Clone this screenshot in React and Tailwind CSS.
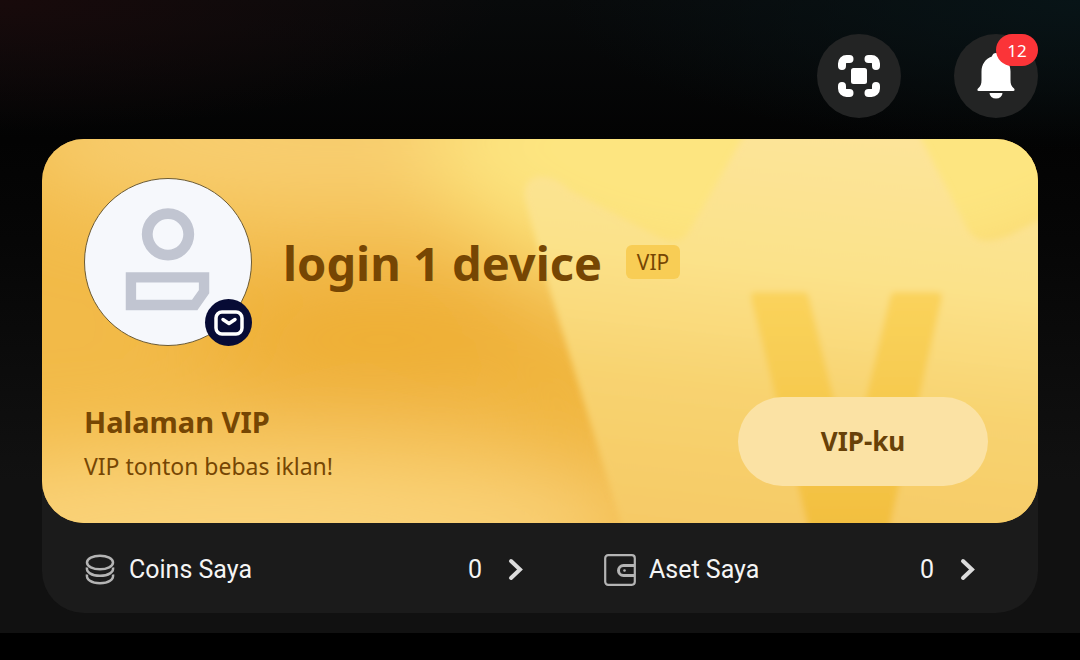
const noto = "font-['Noto_Sans','Noto_Sans_CJK_SC',sans-serif]";

function ScanIcon() {
  return (
    <svg viewBox="0 0 44 44" className="size-11" fill="none" aria-hidden="true">
      <g stroke="#fff" strokeWidth="8" strokeLinecap="round" strokeLinejoin="round">
        <path d="M5 12V9.500a4.500 4.500 0 0 1 4.500-4.500H12.500" />
        <path d="M31.500 5h3a4.500 4.500 0 0 1 4.500 4.500V12" />
        <path d="M39 32v2.500a4.500 4.500 0 0 1-4.500 4.500H31.500" />
        <path d="M12.500 39h-3a4.500 4.500 0 0 1-4.500-4.500V32" />
      </g>
      <rect x="14" y="14" width="16" height="16" rx="2.500" fill="#fff" />
    </svg>
  );
}

function BellIcon() {
  return (
    <svg viewBox="0 0 40 48" className="h-12 w-10" fill="#fff" aria-hidden="true">
      <path d="M20 1c-2 0-3.400 1.200-4.200 3.400C9.500 6.500 5.500 12.500 5.500 19.500V28c0 4-.8 6-3 8-1.800 1.700-1.300 3 .8 3h33.400c2.100 0 2.600-1.300.8-3-2.200-2-3-4-3-8v-8.500c0-7-4-13-10.300-15.100C23.400 2.200 22 1 20 1z" />
      <path d="M13.500 41h13a6.500 5.500 0 0 1-13 0z" />
    </svg>
  );
}

function AvatarIcon() {
  return (
    <svg viewBox="0 0 168 168" className="size-full" fill="none" stroke="#c1c5d1" aria-hidden="true">
      <circle cx="84" cy="56" r="21" strokeWidth="11" />
      <path d="M46.500 99.500h74V114l-9.500 13.500H46.500z" strokeWidth="10.500" />
    </svg>
  );
}

function MailIcon() {
  return (
    <svg viewBox="0 0 30 26" className="h-[26px] w-[30px]" fill="none" stroke="#fff" aria-hidden="true">
      <rect x="2" y="2" width="26" height="22" rx="6" strokeWidth="3.500" />
      <path d="M9 9.500 15 13.500l6-4" strokeWidth="3.500" strokeLinecap="round" strokeLinejoin="round" />
    </svg>
  );
}

function CoinsIcon() {
  return (
    <svg viewBox="0 0 32 32" className="size-8" fill="none" stroke="#b4b4b4" strokeWidth="2.500" aria-hidden="true">
      <ellipse cx="16" cy="8.500" rx="13" ry="6.800" />
      <path d="M3 13.500c-1 4.500 4.500 8.300 13 8.300s14-3.800 13-8.300" />
      <path d="M3 20.500c-1 5 4.500 8.800 13 8.800s14-3.800 13-8.800" />
    </svg>
  );
}

function WalletIcon() {
  return (
    <svg viewBox="0 0 32 32" className="size-8" fill="none" stroke="#b4b4b4" strokeWidth="2.200" aria-hidden="true">
      <rect x="1.200" y="1.200" width="29.600" height="29.600" rx="3" />
      <path d="M30 11.500H19.500a5 5 0 0 0 0 10H30" strokeWidth="3" />
      <circle cx="20.500" cy="16.500" r="1.300" fill="#b4b4b4" stroke="none" />
    </svg>
  );
}

function Chevron() {
  return (
    <svg viewBox="0 0 16 24" className="h-6 w-4" fill="none" stroke="#dcdcdc" strokeWidth="4" aria-hidden="true">
      <path d="M3 3l9 8.500L3 20" strokeLinecap="round" />
    </svg>
  );
}

function CardArt() {
  return (
    <svg
      viewBox="0 0 996 384"
      preserveAspectRatio="xMaxYMid slice"
      className="absolute inset-0 size-full"
      aria-hidden="true"
    >
      <defs>
        <filter id="glow" x="-50%" y="-50%" width="200%" height="200%">
          <feGaussianBlur stdDeviation="45" />
        </filter>
        <filter id="soft">
          <feGaussianBlur stdDeviation="3" />
        </filter>
        <linearGradient id="crown" x1="0.600" y1="0" x2="0.450" y2="1">
          <stop offset="0" stopColor="#fde49a" />
          <stop offset="0.350" stopColor="#fbe28a" />
          <stop offset="0.650" stopColor="#f8d370" />
          <stop offset="1" stopColor="#f6ca66" />
        </linearGradient>
        <linearGradient id="vee" x1="0" y1="0" x2="0" y2="1">
          <stop offset="0" stopColor="#fad35c" />
          <stop offset="1" stopColor="#f2be3e" />
        </linearGradient>
      </defs>
      <rect width="996" height="384" fill="#f2ba48" />
      <g filter="url(#glow)">
        <ellipse cx="290" cy="0" rx="330" ry="80" fill="#f8ce70" />
        <ellipse cx="760" cy="10" rx="370" ry="160" fill="#fde580" />
        <ellipse cx="340" cy="200" rx="190" ry="60" fill="#eeae36" />
        <ellipse cx="200" cy="390" rx="400" ry="80" fill="#fad37a" />
        <ellipse cx="530" cy="270" rx="60" ry="80" fill="#f0b63e" />
      </g>
      <g filter="url(#soft)">
        <path
          d="M483 60c-3-18 10-27 28-20 8 3 12 7 18 12l88 46c14 7 24 5 31-7L706-10h168l52 101c10 14 22 12 40 6l60-32V400H584L508 152z"
          fill="url(#crown)"
        />
        <path
          d="M713 153h48q5 0 6 5l41 168 40-168q1-5 6-5h40q7 0 6 6l-55 241h-76l-60-240q-1-7 4-7z"
          fill="url(#vee)"
        />
      </g>
    </svg>
  );
}

function BalanceLink({ icon, label, value, className }) {
  return (
    <a href="#" className={`flex w-1/2 items-center text-[25px] leading-8 text-[#f5f5f5] ${className}`}>
      {icon}
      <span className="ml-[13px]">{label}</span>
      <span className="mr-[26px] ml-auto">{value}</span>
      <Chevron />
    </a>
  );
}

export default function App() {
  return (
    <div className="flex min-h-screen flex-col bg-black font-[Roboto,sans-serif]">
      <main className="bg-[radial-gradient(ellipse_500px_130px_at_0_0,#180a0b,transparent),radial-gradient(ellipse_520px_150px_at_100%_0,#081417,transparent),linear-gradient(#080a0b,#030303_140px,#060606_240px,#111_480px)] px-[42px] pt-[34px] pb-5">
        <header className="flex justify-end gap-[53px]">
          <button type="button" aria-label="Scan" className="flex size-[84px] items-center justify-center rounded-full bg-[#232424]">
            <ScanIcon />
          </button>
          <button type="button" aria-label="Notifikasi" className="relative flex size-[84px] items-center justify-center rounded-full bg-[#232424]">
            <BellIcon />
            <span className={`absolute top-0 right-0 flex h-8 w-[42px] items-center justify-center rounded-full bg-[#fb3438] pt-0.5 text-[17px] text-white ${noto}`}>
              12
            </span>
          </button>
        </header>

        <div className="mt-[21px] rounded-[42px] bg-[#1b1b1b]">
          <section className={`relative overflow-hidden rounded-[42px] text-[#764603] ${noto}`}>
            <CardArt />
            <div className="relative px-[42px] pt-[39px] pb-[37px]">
              <div className="flex items-center">
                <div className="relative size-[168px] rounded-full border border-[#6b5a33] bg-[#f6f8fc]">
                  <AvatarIcon />
                  <span className="absolute -right-px -bottom-px flex size-[47px] items-center justify-center rounded-full bg-[#070b35]">
                    <MailIcon />
                  </span>
                </div>
                <h1 className="ml-[31px] pt-0.5 text-[47px] leading-[56px] font-bold">login 1 device</h1>
                <span className="ml-6 flex h-[34px] w-[54px] items-center justify-center rounded-md bg-[#f8cd55] pt-0.5 text-[21px]">
                  VIP
                </span>
              </div>

              <div className="mt-[50px] flex items-center justify-between">
                <div className="pt-0.5">
                  <h2 className="text-[29px] leading-[48px] font-bold">Halaman VIP</h2>
                  <p className="text-[23px] leading-10">VIP tonton bebas iklan!</p>
                </div>
                <button type="button" className="mr-2 h-[89px] w-[250px] rounded-full bg-[#fbe2a4] text-[26px] font-bold text-[#684108]">
                  VIP-ku
                </button>
              </div>
            </div>
          </section>

          <nav className="flex h-[90px] items-center pt-1">
            <BalanceLink icon={<CoinsIcon />} label="Coins Saya" value="0" className="pr-4 pl-[42px]" />
            <BalanceLink icon={<WalletIcon />} label="Aset Saya" value="0" className="pr-[62px] pl-16" />
          </nav>
        </div>
      </main>
    </div>
  );
}
